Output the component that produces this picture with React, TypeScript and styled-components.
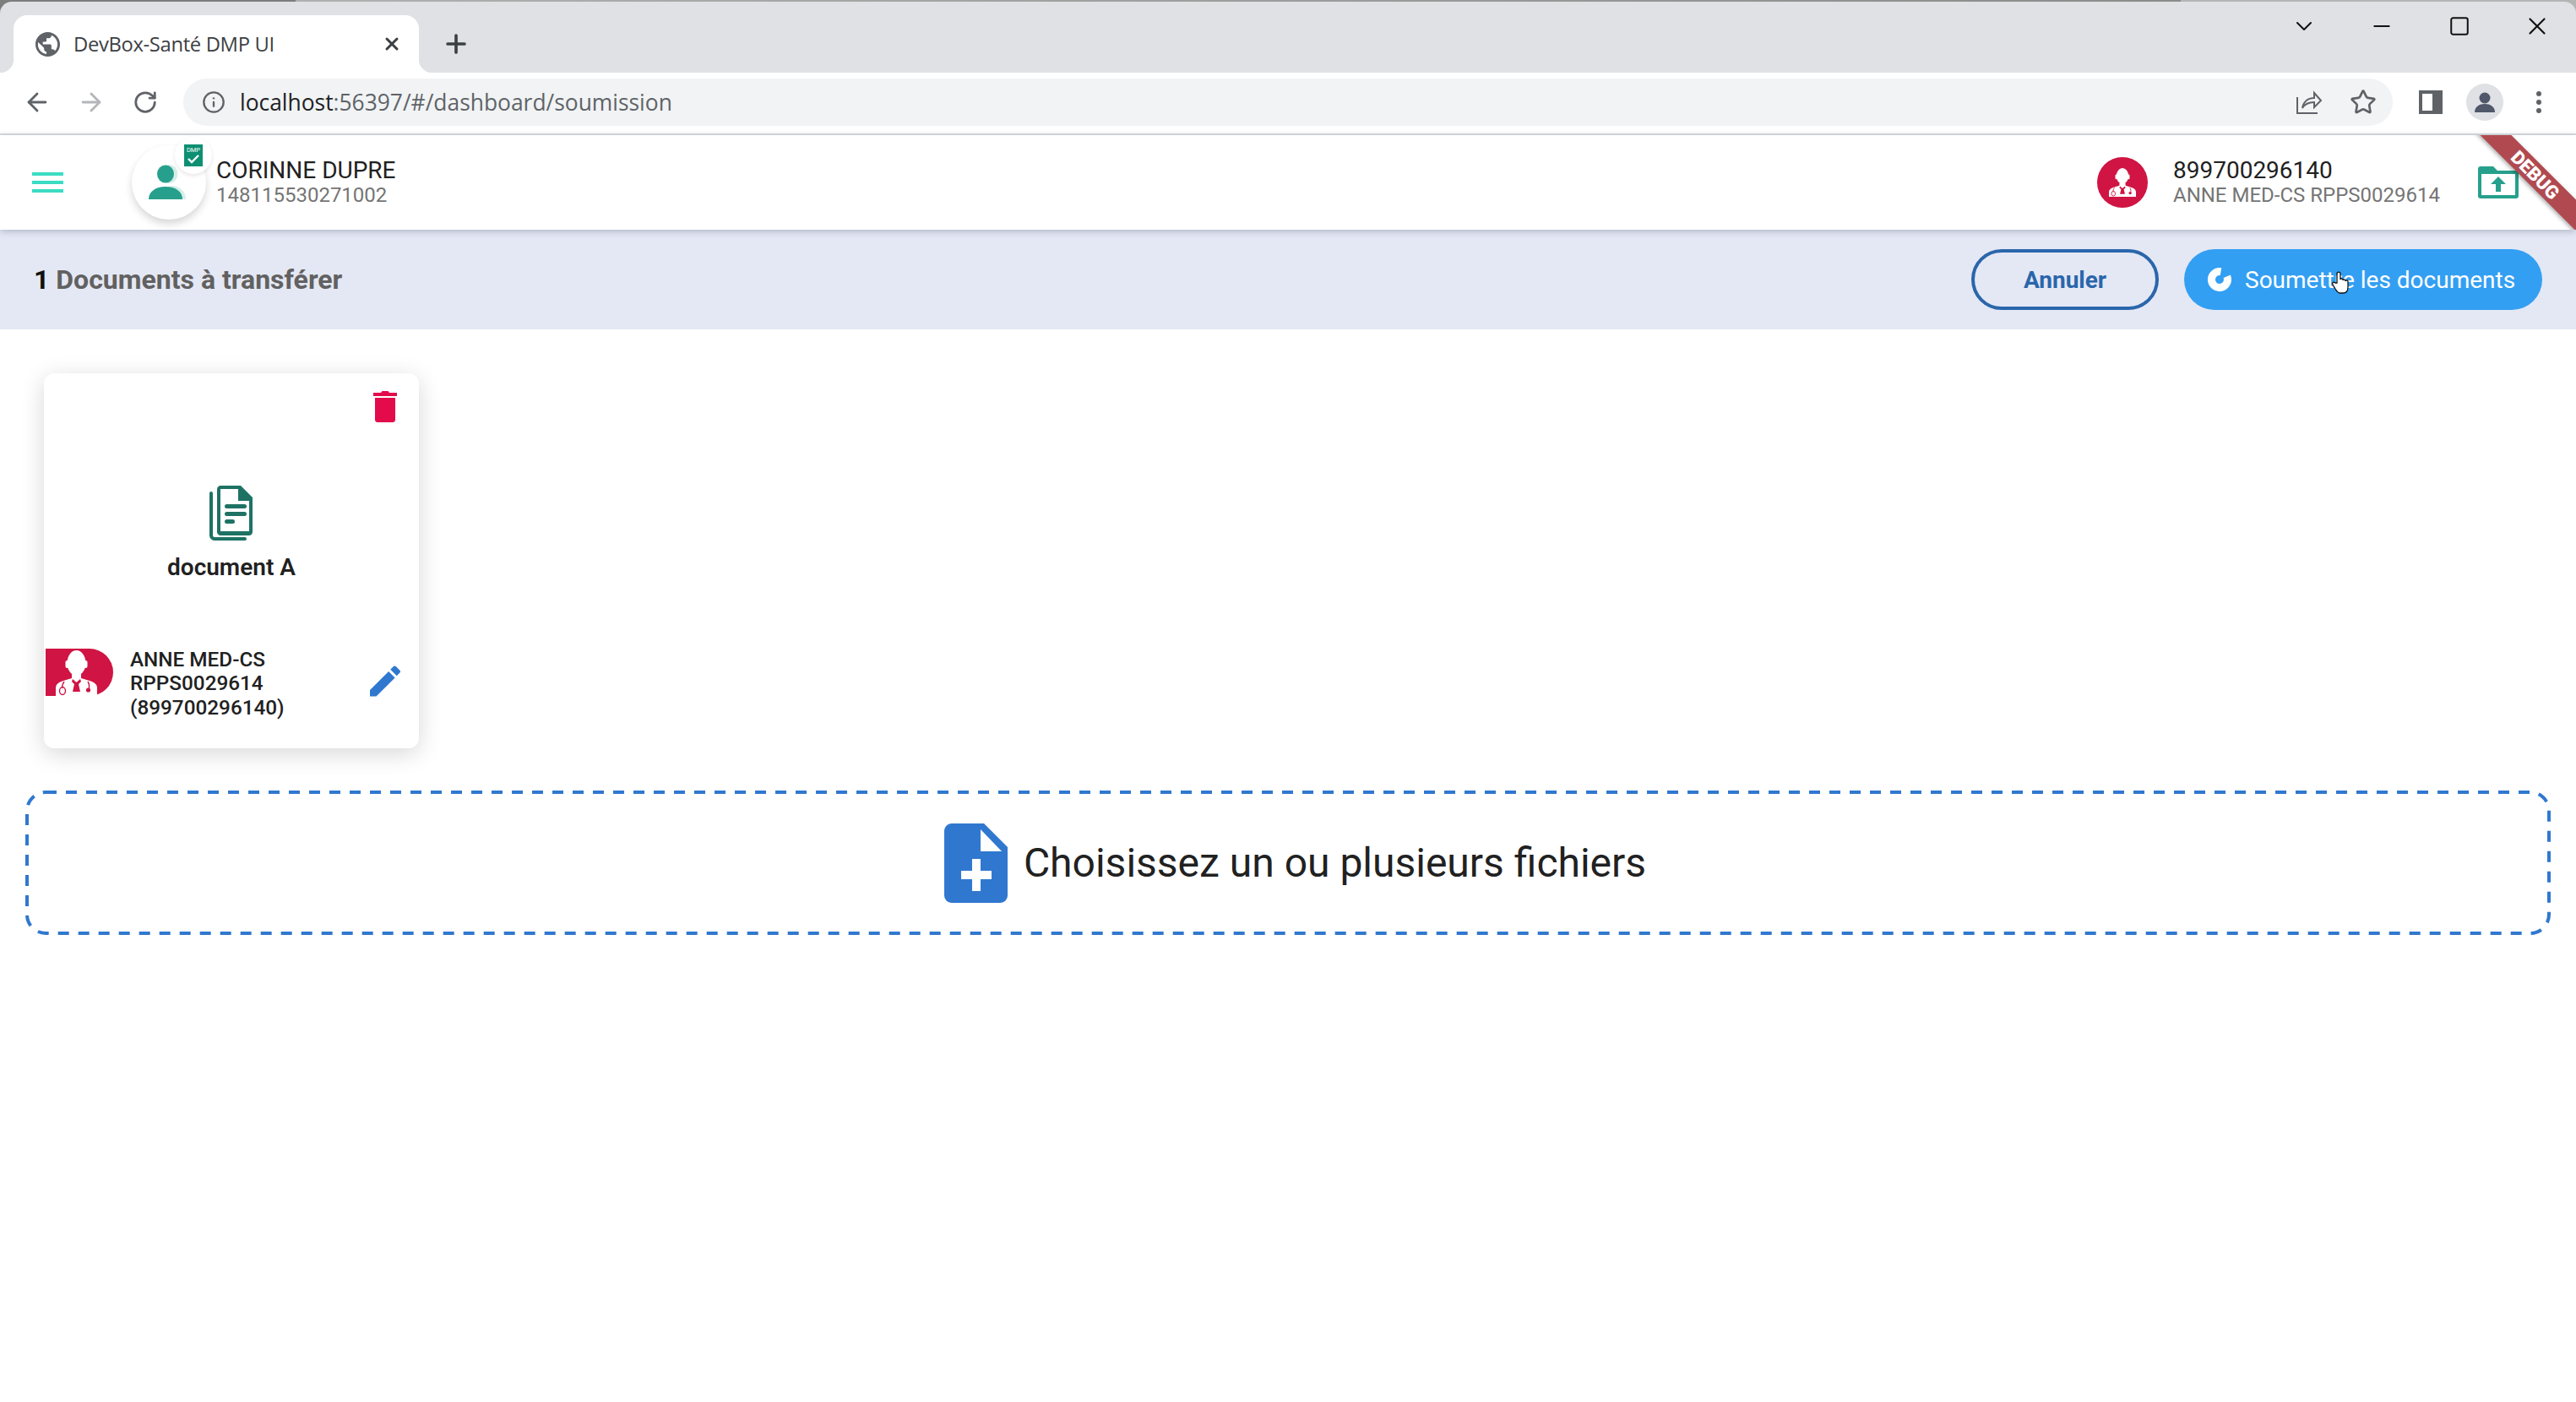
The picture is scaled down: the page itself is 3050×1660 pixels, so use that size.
import React from 'react';
import styled, {createGlobalStyle} from 'styled-components';
import {ArrowLeft, ArrowRight, ChevronDown, Info, Minus, Plus, RotateCw, Square, Star, X} from 'lucide-react';

const GlobalStyle = createGlobalStyle`
    html, body {
        margin: 0;
        padding: 0;
        background: #ffffff;
    }
    * {
        box-sizing: border-box;
    }
`;

const Page = styled.div`
    width: 3050px;
    height: 1660px;
    overflow: hidden;
    padding-top: 2px;
    background: linear-gradient(90deg, #7d7d7d 0, #7d7d7d 350px, #b0b0b0 350px, #8b8b8b 2582px, #b5b5b5 2582px);
    font-family: Roboto, "Liberation Sans", sans-serif;
    display: flex;
    flex-direction: column;
`;

const TabStrip = styled.div`
    height: 84px;
    flex: none;
    display: flex;
    align-items: flex-end;
    padding-left: 16px;
    background: #dfe1e5;
    border-radius: 14px 14px 0 0;
`;

const Tab = styled.div`
    position: relative;
    width: 480px;
    height: 68px;
    display: flex;
    align-items: center;
    padding: 0 20px 0 26px;
    background: #ffffff;
    border-radius: 16px 16px 0 0;
    &::before, &::after {
        content: '';
        position: absolute;
        bottom: 0;
        width: 16px;
        height: 16px;
    }
    &::before {
        left: -16px;
        background: radial-gradient(circle at 0 0, transparent 16px, #ffffff 16.5px);
    }
    &::after {
        right: -16px;
        background: radial-gradient(circle at 100% 0, transparent 16px, #ffffff 16.5px);
    }
`;

const TabTitle = styled.span`
    flex: 1;
    margin-left: 16px;
    font-family: "Open Sans", "Liberation Sans", sans-serif;
    font-size: 23.8px;
    letter-spacing: -0.35px;
    color: #3c4043;
    white-space: nowrap;
`;

const NewTab = styled.div`
    width: 60px;
    height: 68px;
    margin-left: 14px;
    display: flex;
    align-items: center;
    justify-content: center;
    color: #3c4043;
`;

const WindowControls = styled.div`
    margin-left: auto;
    align-self: flex-start;
    display: flex;
`;

const WindowButton = styled.div`
    width: 92px;
    height: 58px;
    display: flex;
    align-items: center;
    justify-content: center;
    color: #111111;
`;

const Toolbar = styled.div`
    height: 74px;
    flex: none;
    display: flex;
    align-items: center;
    padding: 0 12px 2px;
    background: #ffffff;
    border-bottom: 2px solid #dadce0;
`;

const NavButton = styled.div<{$muted?: boolean}>`
    width: 64px;
    height: 64px;
    flex: none;
    display: flex;
    align-items: center;
    justify-content: center;
    color: ${(p) => (p.$muted ? '#b4b6b9' : '#5f6368')};
`;

const UrlBar = styled.div`
    flex: 1;
    height: 56px;
    margin: 0 13px;
    display: flex;
    align-items: center;
    padding-left: 22px;
    border-radius: 28px;
    background: #f1f3f4;
    color: #5f6368;
`;

const UrlText = styled.div`
    margin-left: 17px;
    font-family: "Open Sans", "Liberation Sans", sans-serif;
    font-size: 26.4px;
    color: #5f6368;
    white-space: nowrap;
`;

const UrlHost = styled.span`
    color: #202124;
`;

const UrlActions = styled.div`
    margin-left: auto;
    display: flex;
    padding-right: 3px;
`;

const AppHeader = styled.header`
    position: relative;
    z-index: 2;
    height: 112px;
    flex: none;
    display: flex;
    align-items: center;
    padding: 0 0 0 38px;
    background: #ffffff;
    box-shadow: 0 2px 8px rgba(60, 70, 100, 0.3);
`;

const Hamburger = styled.svg`
    width: 37px;
    height: 24px;
    flex: none;
`;

const AvatarWrap = styled.div`
    position: relative;
    width: 88px;
    height: 88px;
    margin-left: 81px;
    flex: none;
    display: flex;
    align-items: center;
    justify-content: center;
    border-radius: 50%;
    background: #ffffff;
    box-shadow: 0 5px 10px rgba(0, 0, 0, 0.16);
`;

const DmpBadge = styled.div`
    position: absolute;
    top: -10px;
    right: -7px;
    width: 44px;
    height: 44px;
    display: flex;
    align-items: center;
    justify-content: center;
    border-radius: 50%;
    background: #ffffff;
    box-shadow: 0 2px 5px rgba(0, 0, 0, 0.1);
`;

const PatientBlock = styled.div`
    margin-left: 12px;
    display: flex;
    flex-direction: column;
`;

const PrimaryLine = styled.div`
    font-size: 28px;
    line-height: 30px;
    color: #212121;
    white-space: nowrap;
`;

const SecondaryLine = styled.div`
    font-size: 24px;
    line-height: 28px;
    color: #757575;
    white-space: nowrap;
`;

const HeaderRight = styled.div`
    margin-left: auto;
    display: flex;
    align-items: center;
    padding-right: 68px;
`;

const DoctorDisc = styled.div`
    width: 60px;
    height: 60px;
    display: flex;
    align-items: center;
    justify-content: center;
    border-radius: 50%;
    background: #d01443;
`;

const DoctorBlock = styled.div`
    margin: 0 45px 0 30px;
    display: flex;
    flex-direction: column;
`;

const DebugCorner = styled.div`
    position: absolute;
    top: 0;
    right: 0;
    width: 140px;
    height: 112px;
    overflow: hidden;
    pointer-events: none;
`;

const DebugRibbon = styled.div`
    position: absolute;
    top: 34px;
    right: -62px;
    width: 220px;
    height: 26px;
    display: flex;
    align-items: center;
    justify-content: center;
    transform: rotate(45deg);
    background: #b04a50;
    box-shadow: 0 2px 5px rgba(0, 0, 0, 0.35);
    color: #ffffff;
    font-size: 22px;
    font-weight: 900;
`;

const ActionBand = styled.div`
    height: 118px;
    flex: none;
    display: flex;
    align-items: center;
    padding: 0 40px;
    background: #e4e8f4;
`;

const BandTitle = styled.div`
    font-size: 32px;
    font-weight: 700;
    color: #616161;
    white-space: nowrap;
`;

const BandCount = styled.span`
    color: #111111;
`;

const BandActions = styled.div`
    margin-left: auto;
    display: flex;
    gap: 30px;
`;

const OutlineButton = styled.div`
    width: 222px;
    height: 72px;
    display: flex;
    align-items: center;
    justify-content: center;
    border: 4px solid #2a66ab;
    border-radius: 36px;
    color: #2a66ab;
    font-size: 28px;
    font-weight: 700;
`;

const SubmitButton = styled.div`
    position: relative;
    width: 424px;
    height: 72px;
    display: flex;
    align-items: center;
    padding-left: 28px;
    gap: 16px;
    border-radius: 36px;
    background: #339ff3;
    color: #ffffff;
    font-size: 28px;
    white-space: nowrap;
`;

const HandCursor = styled.svg`
    position: absolute;
    left: 175px;
    top: 26px;
    width: 22px;
    height: 28px;
`;

const Content = styled.main`
    flex: 1;
    background: #ffffff;
    padding: 52px 30px 0;
`;

const DocumentCard = styled.section`
    width: 444px;
    height: 444px;
    margin-left: 22px;
    display: flex;
    flex-direction: column;
    border-radius: 12px;
    background: #ffffff;
    box-shadow: 0 6px 28px rgba(0, 0, 0, 0.16);
`;

const CardTop = styled.div`
    height: 58px;
    flex: none;
    display: flex;
    justify-content: flex-end;
    align-items: flex-end;
    padding-right: 26px;
`;

const CardDocument = styled.div`
    margin-top: 74px;
    display: flex;
    flex-direction: column;
    align-items: center;
`;

const DocumentName = styled.div`
    margin-top: 14px;
    font-size: 28px;
    line-height: 36px;
    font-weight: 600;
    color: #212121;
`;

const CardFooter = styled.div`
    margin-top: 77px;
    display: flex;
    align-items: center;
    padding-left: 2px;
`;

const DoctorTab = styled.div`
    width: 80px;
    height: 56px;
    margin-top: -26px;
    padding: 2px 0 0 12px;
    flex: none;
    display: flex;
    align-items: flex-end;
    border-radius: 0 28px 28px 0;
    background: #d01443;
`;

const DoctorLines = styled.div`
    margin-left: 20px;
    flex: 1;
    font-size: 24.3px;
    line-height: 28.3px;
    font-weight: 500;
    color: #212121;
`;

const EditWrap = styled.div`
    margin: -5px 22px 0 0;
    display: flex;
`;

const DropZone = styled.div`
    position: relative;
    height: 171px;
    margin-top: 50px;
    padding-left: 17px;
    display: flex;
    align-items: center;
    justify-content: center;
    gap: 19px;
    font-size: 48px;
    color: #212121;
`;

const DropOutline = styled.svg`
    position: absolute;
    inset: 0;
    width: 100%;
    height: 100%;
`;

function DoctorGlyph({width, height, accent}: {width: number; height: number; accent: string}) {
    return (
        <svg width={width} height={height} viewBox="0 0 49 54" preserveAspectRatio="none" fill="#ffffff">
            <ellipse cx="24.500" cy="15" rx="11" ry="15"/>
            <rect x="11.500" y="12" width="4" height="9" rx="2"/>
            <rect x="33.500" y="12" width="4" height="9" rx="2"/>
            <path d="M19 28h11v5l10 3c6 2 9 4 9 9v9H0v-9c0-5 3-7 9-9l10-3z"/>
            <path d="M20 34l4.500 4 4.500-4 1 3-3 3 2 9h-9l2-9-3-3z" fill={accent}/>
            <path d="M10 37c-2 3-3 5-2 8" fill="none" stroke={accent} strokeWidth="1.400"/>
            <ellipse cx="8" cy="48" rx="3.500" ry="4.500" fill="none" stroke={accent} strokeWidth="1.400"/>
            <path d="M38 37c2 3 2 6 1 9" fill="none" stroke={accent} strokeWidth="1.400"/>
            <circle cx="38.500" cy="47" r="2.600" fill={accent}/>
        </svg>
    );
}

function App() {
    return (
        <Page>
            <GlobalStyle/>
            <TabStrip>
                <Tab>
                    <svg width="29" height="29" viewBox="2 2 20 20" fill="#5f6368">
                        <path d="M12 2C6.48 2 2 6.48 2 12s4.48 10 10 10 10-4.48 10-10S17.52 2 12 2zm-1 17.93c-3.95-.49-7-3.85-7-7.93 0-.62.08-1.21.21-1.79L9 15v1c0 1.1.9 2 2 2v1.93zm6.9-2.54c-.26-.81-1-1.39-1.9-1.39h-1v-3c0-.55-.45-1-1-1H8v-2h2c.55 0 1-.45 1-1V7h2c1.1 0 2-.9 2-2v-.41c2.93 1.19 5 4.06 5 7.41 0 2.08-.8 3.97-2.1 5.39z"/>
                    </svg>
                    <TabTitle>DevBox-Santé DMP UI</TabTitle>
                    <X size={24} strokeWidth={3} color="#3c4043"/>
                </Tab>
                <NewTab><Plus size={34} strokeWidth={2.6}/></NewTab>
                <WindowControls>
                    <WindowButton><ChevronDown size={32} strokeWidth={1.5}/></WindowButton>
                    <WindowButton><Minus size={30} strokeWidth={1.5}/></WindowButton>
                    <WindowButton><Square size={26} strokeWidth={2} absoluteStrokeWidth/></WindowButton>
                    <WindowButton><X size={34} strokeWidth={1.5}/></WindowButton>
                </WindowControls>
            </TabStrip>
            <Toolbar>
                <NavButton><ArrowLeft size={34} strokeWidth={2}/></NavButton>
                <NavButton $muted><ArrowRight size={34} strokeWidth={2}/></NavButton>
                <NavButton><RotateCw size={30} strokeWidth={2.2}/></NavButton>
                <UrlBar>
                    <Info size={28} strokeWidth={2}/>
                    <UrlText><UrlHost>localhost</UrlHost>:56397/#/dashboard/soumission</UrlText>
                    <UrlActions>
                        <NavButton>
                            <svg width="32" height="30" viewBox="0 0 32 30" fill="none" stroke="#5f6368" strokeWidth="2">
                                <path d="M2 9v19h24"/>
                                <path d="M8 22c1-7 6-12 14-12V4l8 9-8 8v-6c-6 0-11 2-14 7z"/>
                            </svg>
                        </NavButton>
                        <NavButton><Star size={32} strokeWidth={2}/></NavButton>
                    </UrlActions>
                </UrlBar>
                <NavButton>
                    <svg width="28" height="28" viewBox="0 0 28 28">
                        <path d="M0 0h28v28H0z" fill="#5f6368"/>
                        <path d="M4 4h12v20H4z" fill="#ffffff"/>
                    </svg>
                </NavButton>
                <NavButton>
                    <svg width="44" height="44" viewBox="0 0 44 44">
                        <circle cx="22" cy="22" r="22" fill="#dfe1e5"/>
                        <circle cx="22" cy="17" r="6.5" fill="#50586a"/>
                        <path d="M10 34c0-7 6-10 12-10s12 3 12 10z" fill="#50586a"/>
                    </svg>
                </NavButton>
                <NavButton>
                    <svg width="8" height="28" viewBox="0 0 8 28" fill="#5f6368">
                        <circle cx="4" cy="4" r="3"/>
                        <circle cx="4" cy="14" r="3"/>
                        <circle cx="4" cy="24" r="3"/>
                    </svg>
                </NavButton>
            </Toolbar>
            <AppHeader>
                <Hamburger viewBox="0 0 37 24" fill="#3bdcc3">
                    <rect width="37" height="4"/>
                    <rect y="10" width="37" height="4"/>
                    <rect y="20" width="37" height="4"/>
                </Hamburger>
                <AvatarWrap>
                    <svg width="48" height="42" viewBox="0 0 48 42">
                        <ellipse cx="24" cy="11" rx="10.500" ry="11" fill="#d5eee9"/>
                        <path d="M16 41v-4c0-7 6-12 12-12s16 5 16 16z" fill="#d5eee9"/>
                        <ellipse cx="20" cy="11" rx="10" ry="10.500" fill="#26a08c"/>
                        <path d="M0 41c0-9 8-15 20-15s20 6 20 15z" fill="#26a08c"/>
                    </svg>
                    <DmpBadge>
                        <svg width="22" height="26" viewBox="0 0 22 26">
                            <rect width="22" height="26" fill="#0e8f72"/>
                            <text x="11" y="9" textAnchor="middle" fontSize="7.5" fill="#ffffff" fontFamily="Roboto">DMP</text>
                            <path d="M5 17l4 4 8-8" fill="none" stroke="#ffffff" strokeWidth="2.4"/>
                        </svg>
                    </DmpBadge>
                </AvatarWrap>
                <PatientBlock>
                    <PrimaryLine>CORINNE DUPRE</PrimaryLine>
                    <SecondaryLine>148115530271002</SecondaryLine>
                </PatientBlock>
                <HeaderRight>
                    <DoctorDisc><DoctorGlyph width={32} height={34} accent="#d01443"/></DoctorDisc>
                    <DoctorBlock>
                        <PrimaryLine>899700296140</PrimaryLine>
                        <SecondaryLine>ANNE MED-CS RPPS0029614</SecondaryLine>
                    </DoctorBlock>
                    <svg width="48" height="38" viewBox="0 0 48 38">
                        <path d="M3 0h15l5 5h22c1.700 0 3 1.300 3 3v27c0 1.700-1.300 3-3 3H3c-1.700 0-3-1.300-3-3V3c0-1.700 1.300-3 3-3z" fill="#26a08c"/>
                        <rect x="4" y="9" width="40" height="25" fill="#ffffff"/>
                        <path d="M24 12l9 9h-6v9h-6v-9h-6z" fill="#26a08c"/>
                    </svg>
                </HeaderRight>
                <DebugCorner><DebugRibbon>DEBUG</DebugRibbon></DebugCorner>
            </AppHeader>
            <ActionBand>
                <BandTitle><BandCount>1</BandCount> Documents à transférer</BandTitle>
                <BandActions>
                    <OutlineButton>Annuler</OutlineButton>
                    <SubmitButton>
                        <svg width="28" height="28" viewBox="0 0 28 28" fill="none" stroke="#ffffff" strokeWidth="9">
                            <path d="M15.500 4.600A9.500 9.500 0 1 0 22.700 10.300"/>
                        </svg>
                        Soumettre les documents
                        <HandCursor viewBox="0 0 22 28">
                            <path d="M6 14V3c0-2.500 4-2.500 4 0v7c0-1.500 3-1.500 3 0v1c0-1.500 3-1.500 3 0v1c0-1.500 3-1.500 3 0v7c0 4-2 7-6 7h-3c-3 0-4-2-6-5l-3-5c-1-2 1-4 3-2z" fill="#ffffff" stroke="#111111" strokeWidth="1.300"/>
                        </HandCursor>
                    </SubmitButton>
                </BandActions>
            </ActionBand>
            <Content>
                <DocumentCard>
                    <CardTop>
                        <svg width="28" height="37" viewBox="0 0 28 37" fill="#e30b4c">
                            <path d="M2 8h24v26c0 1.700-1.300 3-3 3H5c-1.700 0-3-1.300-3-3z"/>
                            <path d="M0 2h9l1.500-2h7L19 2h9v4H0z"/>
                        </svg>
                    </CardTop>
                    <CardDocument>
                        <svg width="52" height="66" viewBox="0 0 52 66">
                            <path d="M2 10v50c0 2 1.500 4 4 4h36" fill="none" stroke="#1e7264" strokeWidth="4" strokeLinecap="round"/>
                            <path d="M13 1h24l14 14v41c0 2-2 4-4 4H13c-2 0-4-2-4-4V5c0-2 2-4 4-4z" fill="#1e7264"/>
                            <path d="M13 5h21v14h13v36H13z" fill="#ffffff"/>
                            <rect x="18" y="23" width="26" height="5" rx="2.500" fill="#1e7264"/>
                            <rect x="18" y="32" width="26" height="5" rx="2.500" fill="#1e7264"/>
                            <rect x="18" y="41" width="12" height="5" rx="2.500" fill="#1e7264"/>
                        </svg>
                        <DocumentName>document A</DocumentName>
                    </CardDocument>
                    <CardFooter>
                        <DoctorTab><DoctorGlyph width={49} height={54} accent="#d01443"/></DoctorTab>
                        <DoctorLines>ANNE MED-CS<br/>RPPS0029614<br/>(899700296140)</DoctorLines>
                        <EditWrap>
                            <svg width="36" height="37" viewBox="3 3 18 18" fill="#3078cf">
                                <path d="M3 17.250V21h3.750L17.810 9.940l-3.750-3.750L3 17.250zM20.710 7.040c.39-.39.39-1.020 0-1.410l-2.340-2.340c-.39-.39-1.020-.39-1.410 0l-1.830 1.830 3.750 3.750 1.830-1.830z"/>
                            </svg>
                        </EditWrap>
                    </CardFooter>
                </DocumentCard>
                <DropZone>
                    <DropOutline>
                        <rect x="2" y="2" width="2986" height="167" rx="22" fill="none" stroke="#3078cf" strokeWidth="4" strokeDasharray="13 11"/>
                    </DropOutline>
                    <svg width="75" height="94" viewBox="0 0 75 94">
                        <path d="M9 0h38l28 28v57c0 5-4 9-9 9H9c-5 0-9-4-9-9V9c0-5 4-9 9-9z" fill="#3078cf"/>
                        <path d="M43 7v26h25z" fill="#ffffff"/>
                        <path d="M20 56h36v10H20z" fill="#ffffff"/>
                        <path d="M33 42h10v38H33z" fill="#ffffff"/>
                    </svg>
                    Choisissez un ou plusieurs fichiers
                </DropZone>
            </Content>
        </Page>
    );
}

export default App;
